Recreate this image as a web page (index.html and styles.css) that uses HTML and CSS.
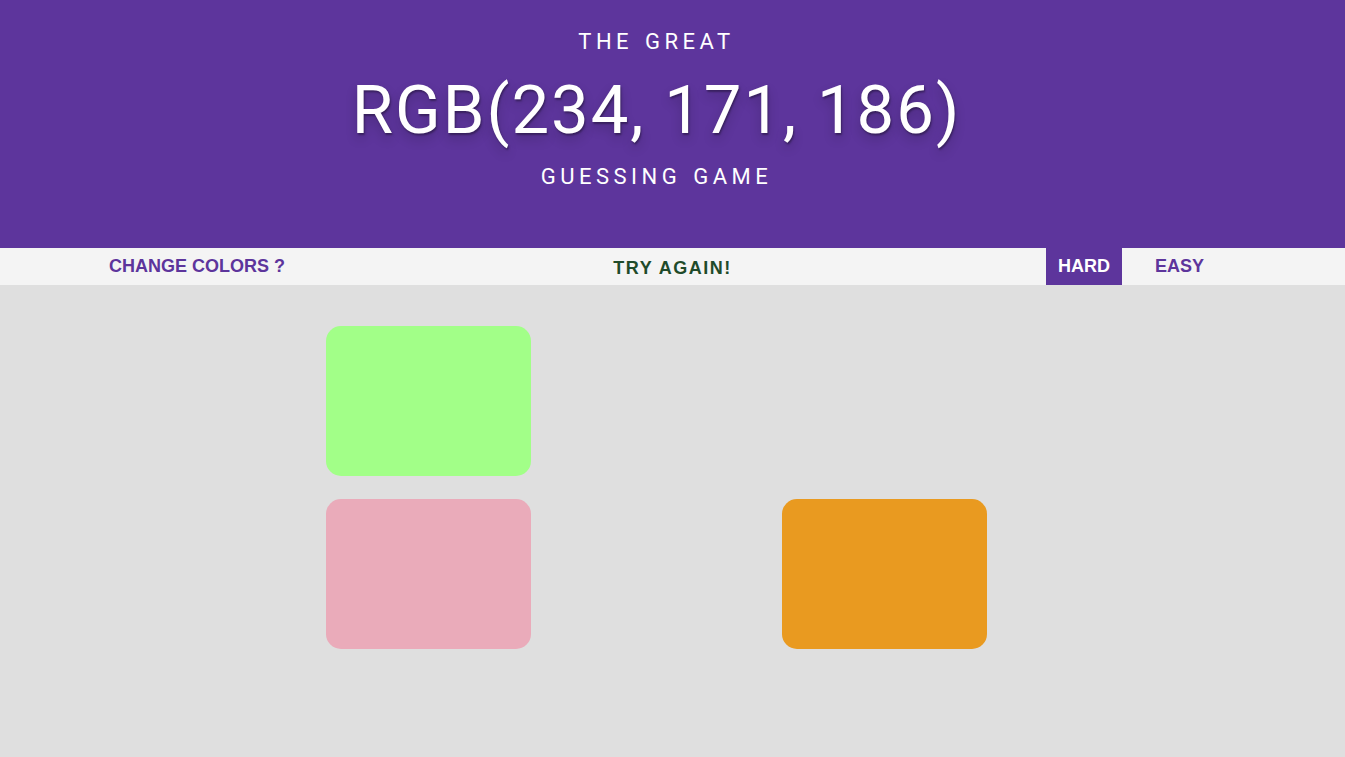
FILE: index.html
```html
<!DOCTYPE html>
<html lang="en">
<head>
<meta charset="utf-8">
<title>The Great RGB Guessing Game</title>
<link rel="stylesheet" href="styles.css">
</head>
<body>
<header class="header">
  <h1 class="title">
    <span class="title-small">The Great</span>
    <span class="title-rgb">RGB(234, 171, 186)</span>
    <span class="title-small title-bottom">Guessing Game</span>
  </h1>
</header>
<nav class="stripe">
  <div class="stripe-left"><button class="link-btn">Change Colors ?</button></div>
  <div class="stripe-center"><span class="message">Try Again!</span></div>
  <div class="stripe-right">
    <button class="mode-btn selected">Hard</button>
    <button class="mode-btn">Easy</button>
  </div>
</nav>
<main class="board">
  <div class="grid">
    <div class="square" style="background: rgb(162, 255, 136)"></div>
    <div class="square hidden"></div>
    <div class="square hidden"></div>
    <div class="square" style="background: rgb(234, 171, 186)"></div>
    <div class="square hidden"></div>
    <div class="square" style="background: rgb(233, 154, 32)"></div>
  </div>
</main>
</body>
</html>
```

FILE: styles.css
```css
* { box-sizing: border-box; }

html, body {
  margin: 0;
  padding: 0;
}

body {
  background: #dfdfdf;
  font-family: Roboto, "Liberation Sans", Arial, sans-serif;
  min-height: 757px;
}

.header {
  background: #5d359c;
  color: #ffffff;
  height: 248px;
  padding-top: 29px;
  padding-right: 32px;
  text-align: center;
}

.title {
  margin: 0;
  font-weight: 400;
}

.title-small {
  display: block;
  font-size: 22px;
  line-height: 26px;
  letter-spacing: 4.5px;
  word-spacing: 2px;
  text-transform: uppercase;
}

.title-rgb {
  display: block;
  margin-top: 15px;
  font-size: 67px;
  line-height: 80px;
  letter-spacing: 2px;
  text-shadow: 1px 2px 2px rgba(0, 0, 0, 0.35), 0 6px 12px rgba(0, 0, 0, 0.2);
}

.title-bottom {
  margin-top: 14px;
}

.stripe {
  background: #f4f4f4;
  height: 37px;
  display: grid;
  grid-template-columns: 1fr auto 1fr;
  align-items: stretch;
  font-family: "Liberation Sans", Arial, sans-serif;
  font-weight: 700;
  font-size: 18px;
}

.stripe-left {
  display: flex;
  align-items: center;
  padding-left: 109px;
}

.stripe-center {
  display: flex;
  align-items: center;
}

.stripe-right {
  display: flex;
  justify-content: flex-end;
  padding-right: 129px;
  gap: 21px;
}

.link-btn,
.mode-btn {
  font: inherit;
  border: none;
  background: none;
  text-transform: uppercase;
  color: #5d359c;
  cursor: pointer;
  padding: 0;
}

.message {
  color: #1f4b2a;
  text-transform: uppercase;
  letter-spacing: 1.5px;
  padding-top: 3px;
}

.mode-btn {
  padding: 0 12px;
  height: 37px;
}

.mode-btn.selected {
  background: #5d359c;
  color: #ffffff;
}

.board {
  padding-top: 41px;
  padding-left: 326px;
}

.grid {
  display: grid;
  grid-template-columns: repeat(3, 205px);
  grid-auto-rows: 150px;
  gap: 23px;
}

.square {
  border-radius: 15px;
}

.square.hidden {
  background: transparent;
}
```
